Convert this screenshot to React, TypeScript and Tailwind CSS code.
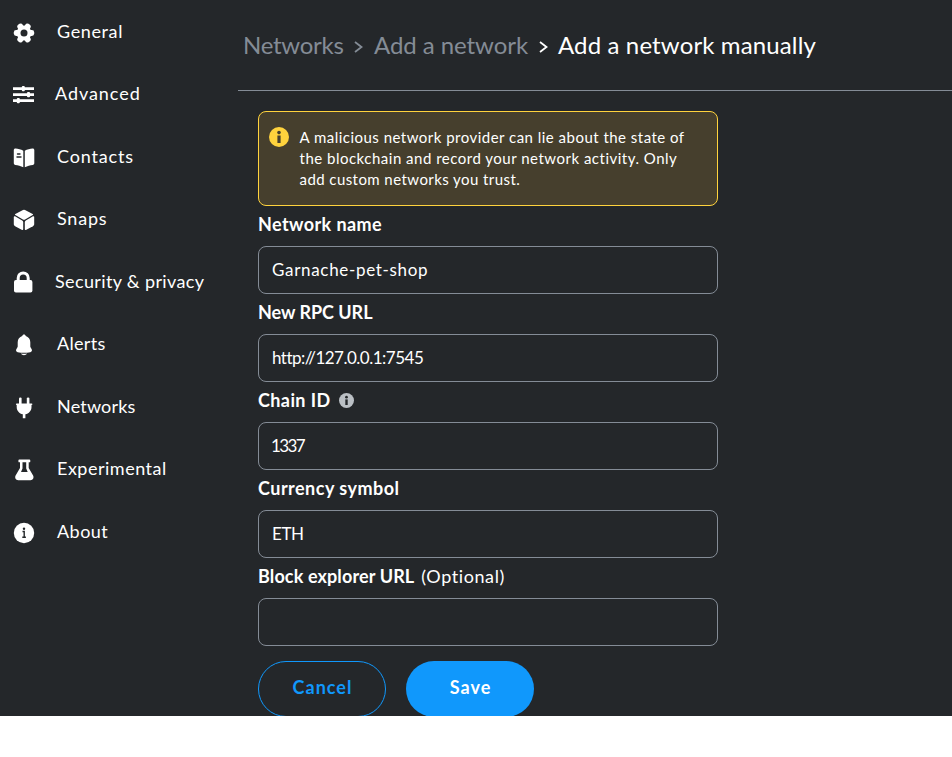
import type { ReactNode } from "react";

const BG = "#24272a";

function Icon({ children }: { children: ReactNode }) {
  return (
    <svg viewBox="0 0 24 24" width="24" height="24" fill="white" className="shrink-0">
      {children}
    </svg>
  );
}

const GearIcon = () => (
  <Icon>
    <circle cx="12" cy="12" r="7.4" />
    {[0, 60, 120].map((a) => (
      <rect key={a} x="1.8" y="9" width="20.4" height="6" rx="2.4" transform={`rotate(${a} 12 12)`} />
    ))}
    <circle cx="12" cy="12" r="3.5" fill={BG} />
  </Icon>
);

const SlidersIcon = () => (
  <Icon>
    <path d="M1 4.2h21v2.8H1zM1 10.2h21v2.8H1zM1 16.2h21v2.8H1z" />
    <rect x="9.8" y="2.9" width="3" height="5.4" rx="1" />
    <rect x="15" y="8.9" width="3" height="5.4" rx="1" />
    <rect x="4.8" y="14.9" width="3" height="5.4" rx="1" />
  </Icon>
);

const BookIcon = () => (
  <Icon>
    <path d="M11.3 4.7C9 3.2 6 2.5 3.6 2.4 2.6 2.3 1.8 3 1.8 4v13.3c0 .8.6 1.5 1.5 1.6 2.6.3 5.5 1 8 2.4z" />
    <path d="M12.8 4.7c2.3-1.5 5.3-2.2 7.7-2.3 1-.1 1.8.6 1.8 1.6v13.3c0 .8-.6 1.5-1.5 1.6-2.6.3-5.5 1-8 2.4z" />
    <path d="M5.500 8h2.500M5 11h4" stroke={BG} strokeWidth="1.4" strokeLinecap="round" />
  </Icon>
);

const CubeIcon = () => (
  <Icon>
    <path d="M11 2.1a2.3 2.3 0 0 1 2 0l7.7 3.9c.5.3.5.8 0 1.1l-7.6 4.4a2.2 2.2 0 0 1-2.2 0L3.300 7.1c-.5-.3-.5-.8 0-1.1z" />
    <path d="M1.8 9c0-.7.6-1 1.2-.7l7.2 4.1c.7.4 1 .9 1 1.7v7.1c0 .7-.5 1-1.1.7l-7-3.7c-.8-.5-1.3-1.2-1.3-2.1z" />
    <path d="M22.2 9c0-.7-.6-1-1.2-.7l-7.2 4.1c-.7.4-1 .9-1 1.7v7.1c0 .7.5 1 1.1.7l7-3.7c.8-.5 1.3-1.2 1.3-2.1z" />
  </Icon>
);

const LockIcon = () => (
  <Icon>
    <path d="M6.2 10V6.900a5 5 0 0 1 10 0V10" fill="none" stroke="white" strokeWidth="3" />
    <rect x="2" y="9" width="18.4" height="12.4" rx="1.9" />
  </Icon>
);

const BellIcon = () => (
  <Icon>
    <path d="M12 1.6c-.9 0-1.6.6-1.8 1.5C7.6 3.9 5.7 6.3 5.7 9.2v4.1c0 .5-.1.9-.4 1.3L4.3 16.3c-.7 1.3 0 2.7 1.4 2.9 4.1.7 8.5.7 12.6 0 1.4-.2 2.1-1.6 1.4-2.9l-1-1.7c-.3-.4-.4-.8-.4-1.3V9.2c0-2.9-1.9-5.3-4.5-6.1-.2-.9-.9-1.5-1.8-1.5z" />
    <path d="M9 20.600c2 .3 4 .3 6 0-.5 1-1.7 1.700-3 1.700s-2.500-.7-3-1.700z" />
  </Icon>
);

const PlugIcon = () => (
  <Icon>
    <rect x="7" y="1.4" width="2.6" height="7" rx="1.2" />
    <rect x="14.8" y="1.4" width="2.6" height="7" rx="1.2" />
    <path d="M4.8 7.5h14.8c.6 0 .8.3.8.7s-.3.8-.9.9v1.9c0 3.8-2.7 6.7-6.1 7.3v3.900h-2.6v-3.900c-3.4-.6-6.1-3.5-6.1-7.3V9.1c-.5-.1-.8-.4-.8-.9s.3-.7.9-.7z" />
  </Icon>
);

const FlaskIcon = () => (
  <Icon>
    <path
      fillRule="evenodd"
      d="M7.3 1.5h10.1c.5 0 .9.4.9.9v1c0 .5-.4.9-.9.9h-.7v5.6l4.4 7.6c1.1 2.2-.2 4.700-2.600 4.700H6.200c-2.400 0-3.700-2.500-2.600-4.700L8 9.900V4.300h-.7c-.5 0-.9-.4-.9-.9v-1c0-.5.4-.9.9-.9zM10.500 4.300v6.200L9 13.900h6.700l-1.500-3.400V4.300z"
    />
  </Icon>
);

const InfoCircleIcon = () => (
  <Icon>
    <circle cx="12" cy="12" r="10.2" />
    <circle cx="12" cy="7.7" r="1.2" fill={BG} />
    <path d="M10.500 10.500h1.700v5.700M10.300 16.300h3.600" fill="none" stroke={BG} strokeWidth="1.4" />
  </Icon>
);

function InfoBadge({ size, fill, mark }: { size: number; fill: string; mark: string }) {
  return (
    <svg viewBox="0 0 20 20" width={size} height={size} className="shrink-0">
      <circle cx="10" cy="10" r="10" fill={fill} />
      <circle cx="10" cy="5.6" r="1.8" fill={mark} />
      <path d="M8.400 8.500h3.200v7.500h-3.200z" fill={mark} />
    </svg>
  );
}

const NAV = [
  { label: "General", icon: <GearIcon />, cls: "pl-[21px] tracking-[0.62px]" },
  { label: "Advanced", icon: <SlidersIcon />, cls: "pl-[19px] tracking-[0.94px]" },
  { label: "Contacts", icon: <BookIcon />, cls: "pl-[21px] tracking-[0.84px]" },
  { label: "Snaps", icon: <CubeIcon />, cls: "pl-[21px] tracking-[0.8px]" },
  { label: "Security & privacy", icon: <LockIcon />, cls: "pl-[19px] tracking-[0.36px]" },
  { label: "Alerts", icon: <BellIcon />, cls: "pl-[21px] tracking-[0.3px]" },
  { label: "Networks", icon: <PlugIcon />, cls: "pl-[21px] tracking-[0.18px]" },
  { label: "Experimental", icon: <FlaskIcon />, cls: "pl-[21px] tracking-[0.5px]" },
  { label: "About", icon: <InfoCircleIcon />, cls: "pl-[21px] tracking-[0.45px]" },
];

const FIELDS = [
  { label: "Network name", labelCls: "tracking-[0.41px]", value: "Garnache-pet-shop", valueCls: "tracking-[0.68px]" },
  { label: "New RPC URL", labelCls: "tracking-[-0.03px]", value: "http://127.0.0.1:7545", valueCls: "tracking-[-0.5px]" },
  { label: "Chain ID", labelCls: "tracking-[0.4px]", value: "1337", valueCls: "-ml-px tracking-[-1.6px]", info: true },
  { label: "Currency symbol", labelCls: "tracking-[0.48px]", value: "ETH", valueCls: "tracking-[-0.4px]" },
  { label: "Block explorer URL", labelCls: "tracking-[0.12px]", value: "", valueCls: "", optional: true },
];

export default function App() {
  return (
    <div className="h-[757px] w-[952px] overflow-hidden bg-white font-[Lato,'Open_Sans',sans-serif] text-white">
      <div className="flex h-[716px] overflow-hidden bg-[#24272a]">
        <nav className="flex w-[238px] shrink-0 flex-col pt-[1.5px] pl-3">
          {NAV.map((n) => (
            <div key={n.label} className="flex h-[62.5px] shrink-0 items-center">
              {n.icon}
              <span className={`pb-1 text-[18px] leading-6 whitespace-nowrap ${n.cls}`}>{n.label}</span>
            </div>
          ))}
        </nav>

        <main className="flex min-w-0 flex-1 flex-col">
          <header className="flex h-[91px] shrink-0 items-center border-b border-[#848c96] pl-[5px] text-[24px] leading-8 whitespace-nowrap text-[#848c96]">
            <span className="w-[111px] tracking-[-0.27px]">Networks</span>
            <Chevron />
            <span className="ml-[11px] w-[165px] tracking-[-0.06px]">Add a network</span>
            <span className="flex items-center text-white">
              <Chevron />
              <span className="ml-2.5 tracking-[0.13px]">Add a network manually</span>
            </span>
          </header>

          <div className="flex w-[480px] flex-col pt-5 pl-5">
            <div className="flex h-[95px] gap-2.5 rounded-lg border border-[#ffd33d] bg-[#463f2d] pt-[15px] pl-2.5">
              <InfoBadge size={20} fill="#ffd33d" mark="#463f2d" />
              <p className="pl-[0.5px] text-[15px] leading-[21px] whitespace-nowrap">
                <span className="block tracking-[0.48px]">A malicious network provider can lie about the state of</span>
                <span className="block tracking-[0.5px]">the blockchain and record your network activity. Only</span>
                <span className="block tracking-[0.43px]">add custom networks you trust.</span>
              </p>
            </div>

            {FIELDS.map((f) => (
              <div key={f.label} className="flex flex-col">
                <div className="flex h-10 items-center pb-1 text-[18px] leading-6 whitespace-nowrap">
                  <span className={`font-bold ${f.labelCls}`}>{f.label}</span>
                  {f.info && (
                    <span className="ml-2">
                      <InfoBadge size={15} fill="#bbc0c5" mark={BG} />
                    </span>
                  )}
                  {f.optional && <span className="ml-[7px] tracking-[0.59px]">(Optional)</span>}
                </div>
                <div className="flex h-12 items-center rounded-lg border border-[#848c96] pl-[13px] text-[17px] leading-6">
                  <span className={f.valueCls}>{f.value}</span>
                </div>
              </div>
            ))}

            <div className="mt-[15px] flex gap-5 text-[18px] font-bold">
              <button className="flex h-14 w-32 items-center justify-center rounded-full border border-[#1098fc] pb-[3px] pl-px tracking-[1px] text-[#1098fc]">
                Cancel
              </button>
              <button className="flex h-14 w-32 items-center justify-center rounded-full bg-[#1098fc] pb-[3px] pl-px tracking-[1px]">
                Save
              </button>
            </div>
          </div>
        </main>
      </div>
    </div>
  );
}

function Chevron() {
  return (
    <svg viewBox="0 0 9 12" width="9" height="12" className="mt-1 shrink-0" fill="none" stroke="currentColor" strokeWidth="1.8">
      <path d="M1 1l6.500 5L1 11" />
    </svg>
  );
}
